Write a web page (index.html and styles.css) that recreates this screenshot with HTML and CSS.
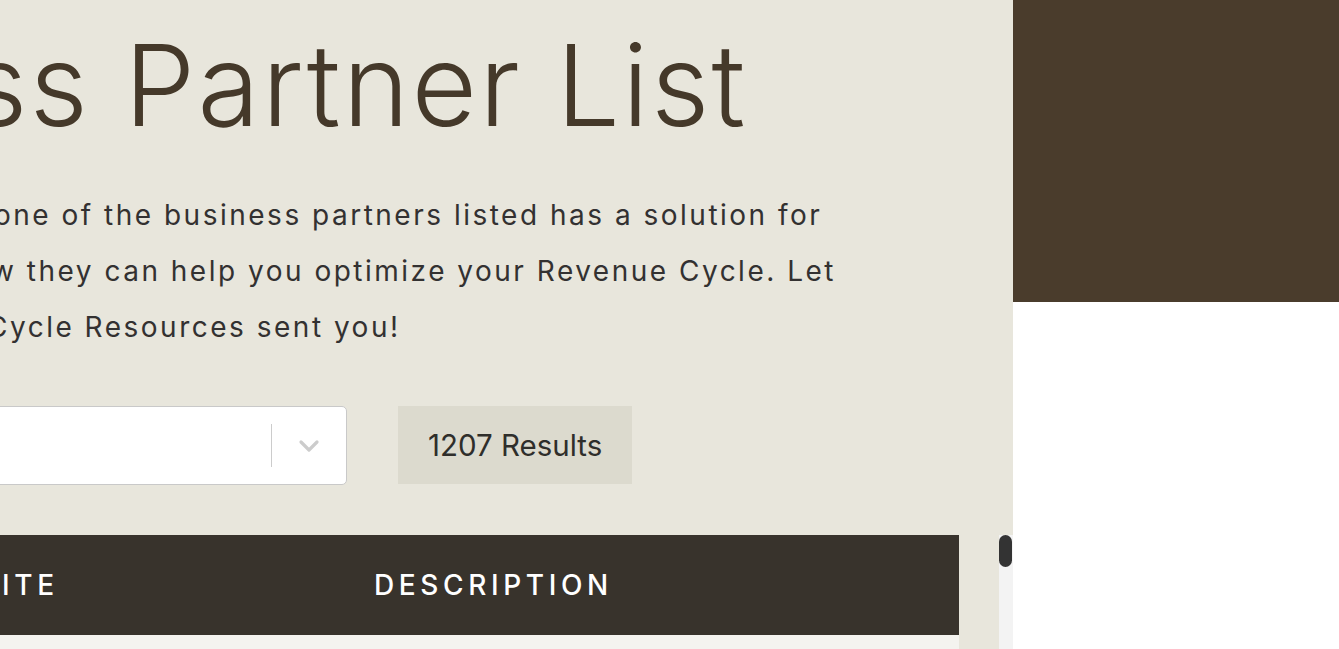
FILE: index.html
```html
<!DOCTYPE html>
<html lang="en">
<head>
<meta charset="utf-8">
<title>Business Partner List</title>
<link rel="stylesheet" href="styles.css">
</head>
<body>
<div class="page">
  <main class="main">
    <h1 class="title">ss Partner List</h1>
    <p class="intro">
      <span class="line l1">one of the business partners listed has a solution for</span>
      <span class="line l2">w they can help you optimize your Revenue Cycle. Let</span>
      <span class="line l3">Cycle Resources sent you!</span>
    </p>
    <div class="controls">
      <div class="select">
        <div class="select-value"></div>
        <div class="select-sep"></div>
        <div class="select-arrow">
          <svg width="22" height="14" viewBox="0 0 22 14"><path d="M3 3 L11 11 L19 3" fill="none" stroke="#cccccc" stroke-width="3.2" stroke-linecap="round" stroke-linejoin="round"/></svg>
        </div>
      </div>
      <div class="results">1207 Results</div>
    </div>
    <div class="table-area">
      <div class="table">
        <div class="thead">
          <div class="th th-site">ITE</div>
          <div class="th th-desc">DESCRIPTION</div>
        </div>
        <div class="row"></div>
      </div>
      <div class="scroll-track"><div class="scroll-thumb"></div></div>
    </div>
  </main>
  <aside class="side">
    <div class="side-top"></div>
    <div class="side-bottom"></div>
  </aside>
</div>
</body>
</html>
```

FILE: styles.css
```css
html, body {
  margin: 0;
  padding: 0;
  height: 100%;
  overflow: hidden;
}
body {
  font-family: "Inter", "Noto Sans", sans-serif;
  background: #ffffff;
}
.page {
  display: flex;
  height: 649px;
}
.main {
  width: 1013px;
  flex: 0 0 1013px;
  background: #e8e6dc;
  overflow: hidden;
}
.title {
  margin: 29px 0 0 -31px;
  font-size: 113px;
  line-height: 1;
  font-weight: 300;
  color: #45392a;
  white-space: nowrap;
  letter-spacing: 2.3px;
}
.intro {
  margin: 45px 0 0 0;
  font-size: 28px;
  line-height: 56px;
  color: #333131;
  font-weight: 400;
  letter-spacing: 2.5px;
}
.line {
  display: block;
  white-space: nowrap;
}
.l1 { margin-left: -6px; }
.l2 { margin-left: -9px; }
.l3 { margin-left: -13px; }
.controls {
  display: flex;
  align-items: flex-start;
  gap: 51px;
  margin-top: 51px;
}
.select {
  box-sizing: border-box;
  width: 360px;
  margin-left: -13px;
  height: 79px;
  background: #ffffff;
  border: 1.5px solid #c9c9c9;
  border-radius: 5px;
  display: flex;
  align-items: center;
}
.select-value { flex: 1; }
.select-sep {
  width: 1.5px;
  height: 43px;
  background: #cccccc;
}
.select-arrow {
  width: 74px;
  display: flex;
  justify-content: center;
  align-items: center;
}
.results {
  box-sizing: border-box;
  height: 78px;
  padding: 0 30px;
  display: flex;
  align-items: center;
  background: #dcdace;
  color: #2f2e2b;
  font-size: 29.5px;
}
.table-area {
  display: flex;
  gap: 40px;
  margin-top: 50px;
}
.table {
  width: 959px;
  flex: 0 0 959px;
}
.thead {
  height: 100px;
  background: #38332c;
  display: flex;
  align-items: center;
  color: #ffffff;
  font-size: 28px;
  font-weight: 500;
  letter-spacing: 0.165em;
}
.th-site {
  width: 374px;
  padding-left: 2px;
  box-sizing: border-box;
}
.row {
  height: 60px;
  background: #f4f3ef;
}
.scroll-track {
  width: 14px;
  flex: 0 0 14px;
  background: #f3f3f3;
  height: 120px;
}
.scroll-thumb {
  width: 13px;
  height: 32px;
  border-radius: 7px;
  background: #333333;
}
.side {
  flex: 1;
  display: flex;
  flex-direction: column;
}
.side-top {
  height: 302px;
  background: #4a3c2c;
}
.side-bottom {
  flex: 1;
  background: #ffffff;
}
```
